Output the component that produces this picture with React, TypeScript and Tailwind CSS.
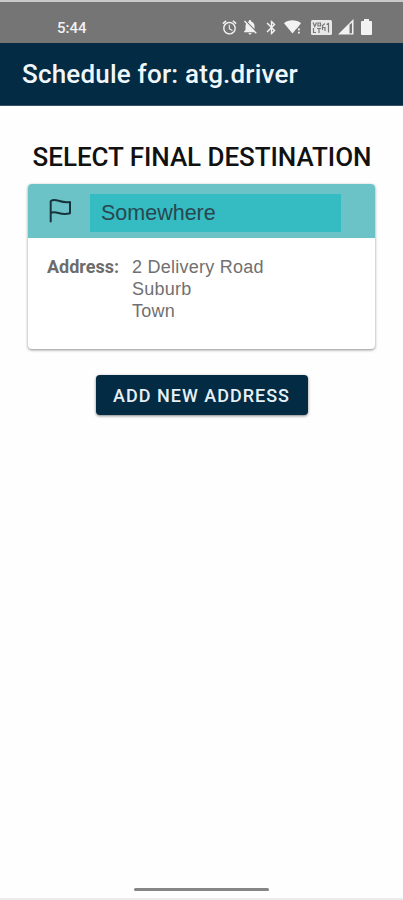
import { MdAlarm, MdNotificationsOff, MdBluetooth } from 'react-icons/md';

const addressLines = ['2 Delivery Road', 'Suburb', 'Town'];

function WifiIcon() {
  return (
    <svg viewBox="0 0 18 16" className="w-[18px] h-4" fill="currentColor">
      <path d="M0 4.200C4.600.400 12.400.400 17 4.200L13.500 8.700 11.500 10.800 8.500 14.600Z" />
      <rect x="14" y="9.500" width="1.800" height="1.800" />
      <rect x="14" y="12.700" width="1.800" height="1.800" />
    </svg>
  );
}

function VolteIcon() {
  return (
    <svg viewBox="0 0 21 15" className="w-[21px] h-[15px]" fill="none">
      <rect width="21" height="15" rx="1.500" fill="#e8e8e8" />
      <g stroke="#777" strokeWidth="1.200">
        <path d="M2 2.500L3.800 6.500 5.500 2.500M7 3H9.500V6H7Z" />
        <path d="M2.500 8V12.500H5M6 8.500H10M8 8.500V13" />
        <path d="M11.500 10V5.500L14 3.500M11.500 7.500H14V11M17.500 3V12.500M15.800 4.800L17.500 3" />
      </g>
    </svg>
  );
}

function SignalIcon() {
  return (
    <svg viewBox="0 0 16 16" className="w-4 h-4" fill="currentColor">
      <path d="M0 15.500L11.500 4V15.500Z" />
      <path d="M11.500 4L15.500 0V15.500H11.500V14.200H14V3.800L11.500 6Z" />
    </svg>
  );
}

function BatteryIcon() {
  return (
    <svg viewBox="0 0 11 16" className="w-[11px] h-4" fill="currentColor">
      <path d="M3 0H8V2H10A1 1 0 0 1 11 3V15A1 1 0 0 1 10 16H1A1 1 0 0 1 0 15V3A1 1 0 0 1 1 2H3Z" />
    </svg>
  );
}

function FlagIcon() {
  return (
    <svg viewBox="0 0 24 26" className="w-6 h-[26px]" fill="none" stroke="#17343d" strokeWidth="2" strokeLinecap="round" strokeLinejoin="round">
      <path d="M2.700 23.500V3.300C4.500 1.700 7.500 1.900 10.500 2.700C14.500 3.900 18 4.700 22 3.900V15.200C18 16.300 14 16 10.500 15C7.500 14.200 4.500 14 2.700 15" />
    </svg>
  );
}

function StatusBar() {
  return (
    <div className="h-[43px] border-t-2 border-[#c9c9c9] bg-[#757575] flex items-start text-[#f2f2f2]">
      <span className="ml-[57px] mt-[15px] text-[15px] leading-[22px] font-medium">5:44</span>
      <div className="ml-auto mr-[31px] mt-[16px] h-[18px] flex items-center">
        <MdAlarm className="w-[17px] h-[17px]" />
        <MdNotificationsOff className="w-[18px] h-[18px] ml-[3px]" />
        <MdBluetooth className="w-[17px] h-[17px] ml-[4px] mr-[4px]" />
        <WifiIcon />
        <span className="w-[9px]" />
        <VolteIcon />
        <span className="w-[6px]" />
        <SignalIcon />
        <span className="w-[7px]" />
        <BatteryIcon />
      </div>
    </div>
  );
}

export default function App() {
  return (
    <div className="w-full h-screen bg-[#fefefe] flex flex-col overflow-hidden font-['Roboto',sans-serif]">
      <StatusBar />
      <header className="h-[63px] bg-[#032b43] flex items-center border-b border-[#365267]">
        <h1 className="ml-[22px] text-[26px] leading-none font-medium tracking-[0.2px] text-[#f0f7fc] whitespace-nowrap">Schedule for: atg.driver</h1>
      </header>

      <main className="flex-1 flex flex-col items-center">
        <h2 className="mt-[35px] ml-px h-8 text-[26px] leading-8 font-medium tracking-[-0.05px] text-[#111] whitespace-nowrap">SELECT FINAL DESTINATION</h2>

        <section className="mt-[11px] w-[347px] h-[165px] rounded bg-white overflow-hidden shadow-[0_1px_3px_rgba(0,0,0,0.45)]">
          <div className="h-[54px] bg-[#6bc3c8] flex items-center pl-5">
            <FlagIcon />
            <div className="ml-[18px] mt-1 w-[251px] h-[38px] bg-[#35bbc2] flex items-center pl-[11px] text-[21.5px] text-[#28484f] font-['Liberation_Sans',sans-serif]">
              Somewhere
            </div>
          </div>
          <div className="flex pl-[19px] pt-[18px]">
            <div className="w-[85px] text-[18px] leading-[22px] font-bold text-[#6c6c6c]">Address:</div>
            <div className="text-[18px] leading-[22px] tracking-[0.25px] text-[#707070] font-['Liberation_Sans',sans-serif]">
              {addressLines.map(line => (
                <div key={line}>{line}</div>
              ))}
            </div>
          </div>
        </section>

        <button className="mt-[26px] w-[212px] h-[40px] rounded bg-[#032b43] text-[18px] font-medium tracking-[1px] text-[#e6f0f7] whitespace-nowrap shadow-[0_1px_3px_rgba(0,0,0,0.5)]">
          ADD NEW ADDRESS
        </button>
      </main>

      <footer className="h-3 flex flex-col items-center justify-between border-b-2 border-[#ececec]">
        <div className="w-[135px] h-[3px] rounded-full bg-[#858585]" />
      </footer>
    </div>
  );
}
